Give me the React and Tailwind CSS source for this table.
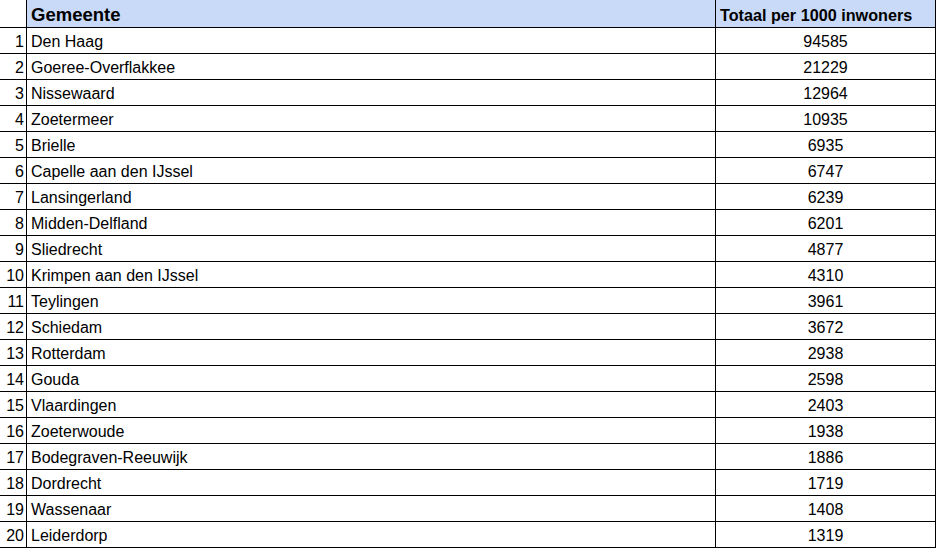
import React from 'react';

const rows = [
    ['Den Haag', 94585],
    ['Goeree-Overflakkee', 21229],
    ['Nissewaard', 12964],
    ['Zoetermeer', 10935],
    ['Brielle', 6935],
    ['Capelle aan den IJssel', 6747],
    ['Lansingerland', 6239],
    ['Midden-Delfland', 6201],
    ['Sliedrecht', 4877],
    ['Krimpen aan den IJssel', 4310],
    ['Teylingen', 3961],
    ['Schiedam', 3672],
    ['Rotterdam', 2938],
    ['Gouda', 2598],
    ['Vlaardingen', 2403],
    ['Zoeterwoude', 1938],
    ['Bodegraven-Reeuwijk', 1886],
    ['Dordrecht', 1719],
    ['Wassenaar', 1408],
    ['Leiderdorp', 1319],
];

const App = () => {
    return (
        <div className="w-[937px] h-[549px] bg-white text-black font-['Liberation_Sans',Arial,sans-serif]">
            <div className="w-[936px]">
                <div className="flex h-[28px] border-b border-black">
                    <div className="w-[27px] border-r border-black"></div>
                    <div className="w-[689px] border-r border-black bg-[#c9daf8] pl-[4px] pt-[3px] flex items-center text-[18.5px] font-bold leading-none">
                        Gemeente
                    </div>
                    <div className="w-[220px] border-r border-black bg-[#c9daf8] pl-[4px] pt-[3px] flex items-center text-[16.2px] font-bold leading-none">
                        Totaal per 1000 inwoners
                    </div>
                </div>
                {rows.map(([name, value], i) => (
                    <div key={name} className="flex h-[26px] border-b border-black text-[16px] leading-none">
                        <div className="w-[27px] border-r border-black pt-[2px] pr-[2px] flex items-center justify-end">
                            {i + 1}
                        </div>
                        <div className="w-[689px] border-r border-black pt-[2px] pl-[4px] flex items-center">
                            {name}
                        </div>
                        <div className="w-[220px] border-r border-black pt-[2px] flex items-center justify-center">
                            {value}
                        </div>
                    </div>
                ))}
            </div>
        </div>
    );
};

export default App;
